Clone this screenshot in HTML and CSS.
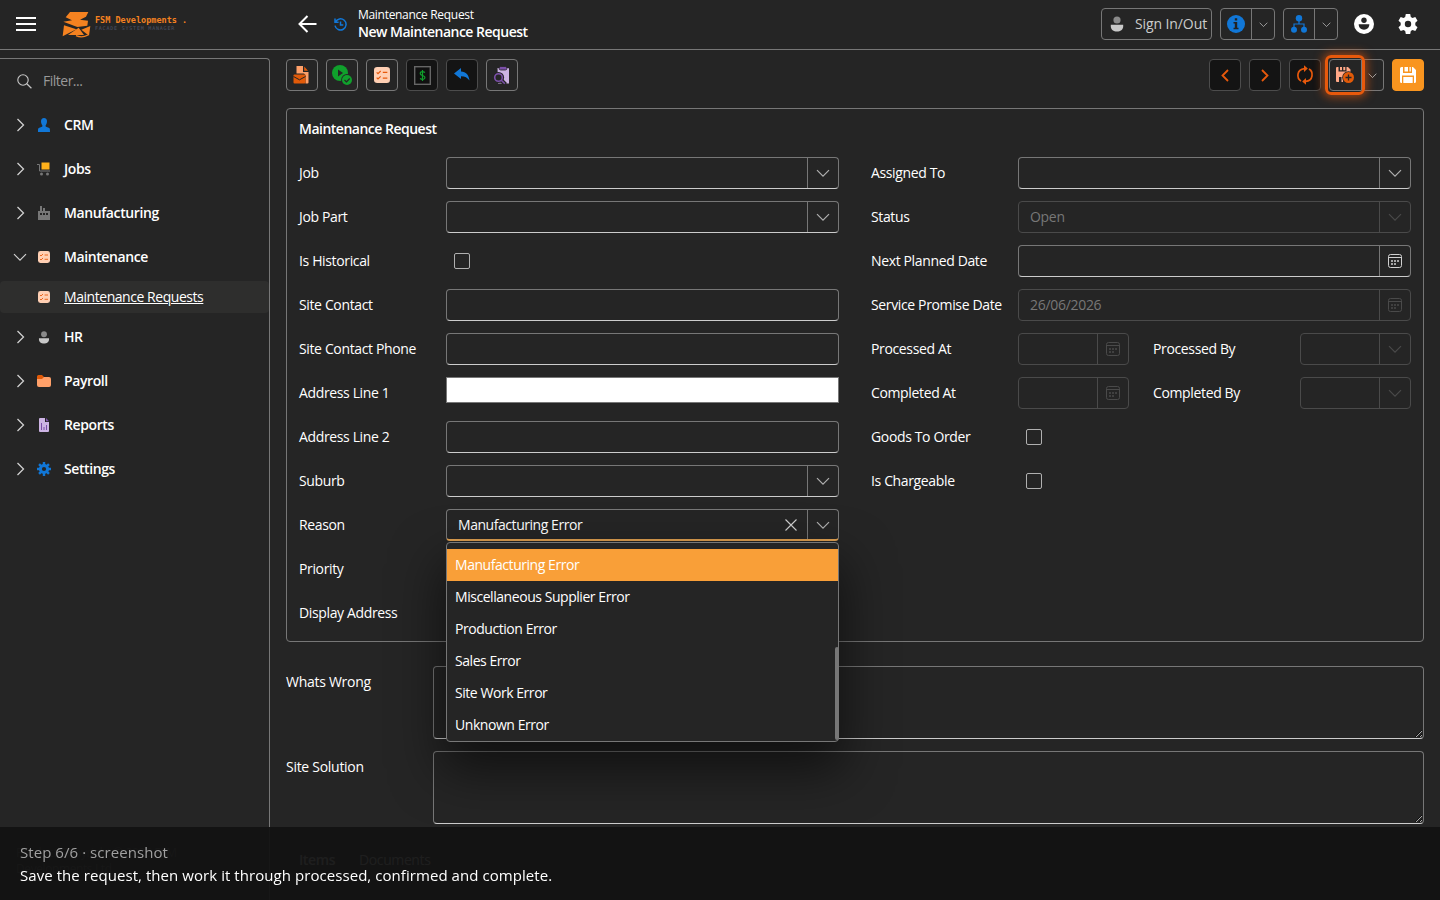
FILE: index.html
```
<!DOCTYPE html>
<html lang="en">
<head>
  <meta charset="UTF-8" />
  <meta name="viewport" content="width=device-width, initial-scale=1.0"/>
  <title>New Maintenance Request</title>
  <link rel="stylesheet" href="styles.css">
</head>
<body>
  <!-- shared icons -->
  <svg class="sprite" xmlns="http://www.w3.org/2000/svg">
    <symbol id="chev-right" viewBox="0 0 14 14"><path d="M4.500 1l6 6-6 6" fill="none" stroke="currentColor" stroke-width="1.300"/></symbol>
    <symbol id="chev-down" viewBox="0 0 14 14"><path d="M1 4.200l6 6 6-6" fill="none" stroke="currentColor" stroke-width="1.200"/></symbol>
    <symbol id="calendar" viewBox="0 0 14 14">
      <rect x=".5" y=".5" width="13" height="13" rx="2" fill="none" stroke="currentColor"/>
      <path d="M1 3.500h12" stroke="currentColor"/>
      <path d="M6 6h2v2H6zM9 6h2v2H9zM3 6h2v2H3zM3 9h2v2H3zM6 9h2v2H6z" fill="currentColor" opacity=".75"/>
    </symbol>
    <symbol id="tasks" viewBox="0 0 12 12">
      <rect width="12" height="12" rx="2.400" fill="#ffcfb3"/>
      <path d="M2 4l1 1 2-2M2 8l1 1 2-2M6.600 4h3.400M6.600 8.300h3.400" fill="none" stroke="#e8590c" stroke-width=".9"/>
    </symbol>
    <symbol id="person" viewBox="0 0 14 16">
      <circle cx="7" cy="4" r="3.600" fill="#8a8a8a"/>
      <path d="M.8 8.800h12.400v1.600c0 3-2.800 5-6.200 5s-6.200-2-6.200-5z" fill="#c8c8c8"/>
    </symbol>
  </svg>

  <header class="topbar">
    <div class="brand">
      <svg class="burger" width="20" height="14" viewBox="0 0 20 14"><path d="M0 1h20M0 7h20M0 13h20" stroke="#fff" stroke-width="2"/></svg>
      <svg class="logo" width="29" height="27" viewBox="186 30 87 81">
        <path fill="#f58220" d="M210 33h55l-7 14-18 9 24 3-2 15-30 4-42-16 26-4-19-9z"/>
        <path fill="#f58220" d="M192 73l37 12-41 21zM236 80l16 22h-48zM271 75l-4 29-23-18z"/>
        <path d="M228 104q18 8 36-2" fill="none" stroke="#f58220" stroke-width="4"/>
      </svg>
      <div class="logo-text">
        <b>FSM Developments .</b>
        <span>FACADE SYSTEM MANAGER</span>
      </div>
    </div>
    <div class="crumbs">
      <svg width="19" height="18" viewBox="0 0 19 18"><path d="M18.500 9H1.500M9.500 1l-8 8 8 8" fill="none" stroke="#fff" stroke-width="2"/></svg>
      <svg class="history" width="13" height="13" viewBox="0 0 13 13"><path d="M1.400 4A5.600 5.600 0 1 1 1 7.600M1 .6V4.200h3.600M6.500 3.600v3.400h2.800" fill="none" stroke="#1177d7" stroke-width="1.500"/></svg>
      <div class="titles">
        <span>Maintenance Request</span>
        <b>New Maintenance Request</b>
      </div>
    </div>
    <div class="top-actions">
      <button class="sign"><svg width="14" height="16"><use href="#person"/></svg>Sign In/Out</button>
      <div class="split">
        <span class="main-part"><svg width="18" height="18" viewBox="0 0 18 18"><circle cx="9" cy="9" r="9" fill="#1177d7"/><path d="M7.800 3.200h2.400v2.300H7.800zM6.500 7h3.700v5.800h1.300v1.400h-5v-1.400h1.300V8.400H6.500z" fill="#222"/></svg></span>
        <span class="drop-part"><svg width="9" height="9"><use href="#chev-down"/></svg></span>
      </div>
      <div class="split">
        <span class="main-part"><svg width="16" height="18" viewBox="0 0 16 18"><g fill="#1177d7"><circle cx="8" cy="3.200" r="3.200"/><circle cx="3" cy="14.800" r="3"/><circle cx="13" cy="14.800" r="3"/></g><path d="M8 5v4M3 13V9h10v4" fill="none" stroke="#1177d7" stroke-width="1.200"/></svg></span>
        <span class="drop-part"><svg width="9" height="9"><use href="#chev-down"/></svg></span>
      </div>
      <svg class="account" width="20" height="20" viewBox="0 0 20 20"><circle cx="10" cy="10" r="10" fill="#fff"/><circle cx="10" cy="6.300" r="2.700" fill="#252525"/><path d="M4.700 10.300h10.600c0 3.500-2.200 5.400-5.300 5.400s-5.300-1.900-5.300-5.400z" fill="#252525"/></svg>
      <svg width="20" height="20" viewBox="0 0 20 20"><path fill="#fff" fill-rule="evenodd" d="M7.800 0h4.400l.6 2.900 1.700 1 2.800-1 2.200 3.800L17.300 8.700v2.600l2.200 2-2.200 3.800-2.800-1-1.700 1-.6 2.900H7.800l-.6-2.900-1.700-1-2.800 1L.5 13.300l2.200-2V8.700L.5 6.700l2.200-3.800 2.800 1 1.700-1zM10 6.800a3.200 3.200 0 1 0 0 6.400 3.200 3.200 0 0 0 0-6.400z"/></svg>
    </div>
  </header>

  <div class="layout">
    <nav class="sidebar">
      <div class="filter">
        <svg width="15" height="15" viewBox="0 0 15 15"><circle cx="6" cy="6" r="5.200" fill="none" stroke="#c8c8c8" stroke-width="1.100"/><path d="M9.800 9.800l4.600 4.400" stroke="#c8c8c8" stroke-width="1.200"/></svg>
        <span>Filter...</span>
      </div>
      <div class="nav-item">
        <svg class="chev" width="14" height="14"><use href="#chev-right"/></svg>
        <svg class="ico" width="14" height="14" viewBox="0 0 14 14"><path d="M7 0c2 0 3 1.300 3 3.300S9 7 8.500 7.700c0 1 .5 1.200 2.500 1.700s2 1.300 2 4.600H1c0-3.300 0-4.100 2-4.600s2.500-.7 2.500-1.700C5 7 4 5.300 4 3.300S5 0 7 0z" fill="#1177d7"/></svg>
        <b>CRM</b>
      </div>
      <div class="nav-item">
        <svg class="chev" width="14" height="14"><use href="#chev-right"/></svg>
        <svg class="ico" width="14" height="14" viewBox="0 0 14 14"><path d="M4.500 .5h8v7h-8z" fill="#ffb11b"/><path d="M0 2.500h2.500v6.500H13" fill="none" stroke="#777"/><circle cx="4.500" cy="12" r="1.500" fill="#777"/><circle cx="10.500" cy="12" r="1.500" fill="#777"/></svg>
        <b>Jobs</b>
      </div>
      <div class="nav-item">
        <svg class="chev" width="14" height="14"><use href="#chev-right"/></svg>
        <svg class="ico" width="14" height="14" viewBox="0 0 14 14"><path d="M1 5h2V0h2v5h1V2h2v3h5v9H1z" fill="#777"/><path d="M3 7h2v2H3zM6 7h2v2H6zM9 7h2v2H9z" fill="#252525"/></svg>
        <b>Manufacturing</b>
      </div>
      <div class="nav-item">
        <svg class="chev" width="14" height="14"><use href="#chev-down"/></svg>
        <svg class="ico" width="12" height="12"><use href="#tasks"/></svg>
        <b>Maintenance</b>
      </div>
      <div class="nav-item sub">
        <svg class="ico" width="12" height="12"><use href="#tasks"/></svg>
        <a>Maintenance Requests</a>
      </div>
      <div class="nav-item">
        <svg class="chev" width="14" height="14"><use href="#chev-right"/></svg>
        <svg class="ico" width="12" height="13"><use href="#person"/></svg>
        <b>HR</b>
      </div>
      <div class="nav-item">
        <svg class="chev" width="14" height="14"><use href="#chev-right"/></svg>
        <svg class="ico" width="14" height="12" viewBox="0 0 14 12"><rect y="2" width="14" height="10" rx="2" fill="#ffa069"/><path d="M0 4V1.500Q0 0 1.500 0H5l2 2-2 2z" fill="#e25a08"/></svg>
        <b>Payroll</b>
      </div>
      <div class="nav-item">
        <svg class="chev" width="14" height="14"><use href="#chev-right"/></svg>
        <svg class="ico" width="10" height="14" viewBox="0 0 10 14"><path d="M1 0h5v4h4v9q0 1-1 1H1q-1 0-1-1V1q0-1 1-1z" fill="#cdb4e4"/><path d="M7 0l3 3.200H7z" fill="#7b4fa8"/><path d="M2.500 5v7M5 9v3M7.500 7v5" stroke="#7b4fa8"/></svg>
        <b>Reports</b>
      </div>
      <div class="nav-item">
        <svg class="chev" width="14" height="14"><use href="#chev-right"/></svg>
        <svg class="ico" width="14" height="14" viewBox="0 0 14 14"><circle cx="7" cy="7" r="3.600" fill="none" stroke="#1177d7" stroke-width="3"/><path d="M7 0v3M7 11v3M0 7h3M11 7h3M2.050 2.050l2 2M9.950 9.950l2 2M11.950 2.050l-2 2M4.050 9.950l-2 2" stroke="#1177d7" stroke-width="2.400"/></svg>
        <b>Settings</b>
      </div>
      <div class="copyright">Product Copyright © 2026 FSM Developments Ltd</div>
    </nav>

    <main>
      <div class="toolbar">
        <button><svg width="18" height="20" viewBox="0 0 18 20"><path d="M3.500 1h6.500v6h5.500v10.500q0 1-1 1H12.500V10L11 8.500H3.500z" fill="#ffa069"/><path d="M11.200 1.500L15 5.800h-3.800z" fill="#e25a08"/><rect x=".5" y="9.500" width="12" height="9" rx="1" fill="#e25a08"/><path d="M.5 11.500l6 3.300 6-3.300" fill="none" stroke="#252525"/></svg></button>
        <button><svg width="20" height="20" viewBox="0 0 20 20"><circle cx="8" cy="8" r="8" fill="#10a02c"/><path d="M6 4.500l5 3.500-5 3.500z" fill="#252525"/><circle cx="15" cy="15" r="5.900" fill="#252525"/><circle cx="15" cy="15" r="5" fill="#10a02c"/><path d="M12.500 15l2 2 3.200-3.500" fill="none" stroke="#252525" stroke-width="1.200"/></svg></button>
        <button><svg width="16" height="16"><use href="#tasks"/></svg></button>
        <button class="dark"><svg width="17" height="19" viewBox="0 0 17 19"><rect x=".7" y=".7" width="15.600" height="17.600" fill="#101010" stroke="#666" stroke-width="1.400"/><path d="M11 6.500Q8.500 4.800 6.500 6.200 5.500 8.700 8.500 9.500 11.800 10.500 10.500 12.600 8.500 14.200 6 12.600M8.500 4v11" fill="none" stroke="#10a02c" stroke-width="1.200"/></svg></button>
        <button class="dark"><svg width="16" height="14" viewBox="0 0 16 14"><path d="M0 5.500L7 0v3.400c5 .2 8 3.600 8.500 9.100C13.500 9.600 11 8.200 7 8.200V11z" fill="#1177d7"/></svg></button>
        <button><svg width="18" height="19" viewBox="0 0 18 19"><path d="M4.500 2H15q1 0 1 1v14.500H5z" fill="#cdb4e4"/><rect x="6" y=".5" width="8" height="3.500" rx="1.700" fill="#7b4fa8" stroke="#252525" stroke-width=".8"/><circle cx="5.500" cy="11.500" r="5.600" fill="#252525"/><path d="M8 14l4.500 4.500" stroke="#252525" stroke-width="4"/><circle cx="5.500" cy="11.500" r="3.800" fill="none" stroke="#7b4fa8" stroke-width="1.600"/><path d="M8.300 14.300l3.500 3.500" stroke="#7b4fa8" stroke-width="1.600"/></svg></button>

        <div class="spacer"></div>

        <button class="dark"><svg width="8" height="13" viewBox="0 0 8 13"><path d="M7 1L1.500 6.500 7 12" fill="none" stroke="#e8590c" stroke-width="1.800"/></svg></button>
        <button class="dark"><svg width="8" height="13" viewBox="0 0 8 13"><path d="M1 1l5.500 5.500L1 12" fill="none" stroke="#e8590c" stroke-width="1.800"/></svg></button>
        <button class="dark"><svg width="18" height="20" viewBox="0 0 18 20"><path d="M5 16C.6 13.500 .2 4.500 8.500 3.600M13 4C17.400 6.500 17.800 15.500 9.500 16.400" fill="none" stroke="#e8590c" stroke-width="1.700"/><path d="M8 .2l3.800 3.400L8 7zM10 19.800l-3.800-3.400L10 13z" fill="#e8590c"/></svg></button>
        <div class="save-new">
          <button class="highlight"><svg width="19" height="18" viewBox="0 0 19 18"><path d="M1 1h1.500v4.500h8V1H12l2.500 2.500v4L7 9v7H5.500v-5H3v5H1q-1 0-1-1V2q0-1 1-1zM4 1h2v3.200H4zM7.300 1h2v3.200h-2z" fill="#ffa887"/><circle cx="12.500" cy="11.500" r="6.300" fill="#252525"/><circle cx="12.500" cy="11.500" r="5.500" fill="#e25a08"/><path d="M12.500 8.500v6M9.500 11.500h6" stroke="#252525" stroke-width="1.300"/></svg></button>
          <button class="more"><svg width="9" height="9"><use href="#chev-down"/></svg></button>
        </div>
        <button class="primary"><svg width="16" height="16" viewBox="0 0 16 16"><path d="M1.500 0H3v6h9V0h1l3 3v11.500q0 1.500-1.500 1.500H14V8.500H2V16h-.5Q0 16 0 14.500v-13Q0 0 1.500 0zM4.500 0H8v4.500H4.500zM9.500 0h1.300v4.500H9.500zM3.300 10h9.400v6H3.300z" fill="#fff"/></svg></button>
      </div>

      <section class="group">
        <h2>Maintenance Request</h2>
        <div class="columns">
          <div class="col">
            <div class="row"><label>Job</label><div class="field"><span></span><i><svg width="14" height="14"><use href="#chev-down"/></svg></i></div></div>
            <div class="row"><label>Job Part</label><div class="field"><span></span><i><svg width="14" height="14"><use href="#chev-down"/></svg></i></div></div>
            <div class="row"><label>Is Historical</label><div class="check"></div></div>
            <div class="row"><label>Site Contact</label><div class="field"></div></div>
            <div class="row"><label>Site Contact Phone</label><div class="field"></div></div>
            <div class="row"><label>Address Line 1</label><div class="field plain"></div></div>
            <div class="row"><label>Address Line 2</label><div class="field"></div></div>
            <div class="row"><label>Suburb</label><div class="field"><span></span><i><svg width="14" height="14"><use href="#chev-down"/></svg></i></div></div>
            <div class="row">
              <label>Reason</label>
              <div class="field open">
                <span>Manufacturing Error</span>
                <svg class="clear" width="12" height="12" viewBox="0 0 12 12"><path d="M.5.5l11 11M11.500.5l-11 11" stroke="#d0d0d0" stroke-width="1.100"/></svg>
                <i><svg width="14" height="14"><use href="#chev-down"/></svg></i>
                <ul class="dropdown">
                  <li class="selected">Manufacturing Error</li>
                  <li>Miscellaneous Supplier Error</li>
                  <li>Production Error</li>
                  <li>Sales Error</li>
                  <li>Site Work Error</li>
                  <li>Unknown Error</li>
                </ul>
              </div>
            </div>
            <div class="row"><label>Priority</label><div class="field"></div></div>
            <div class="row"><label>Display Address</label><div class="field"></div></div>
          </div>

          <div class="col">
            <div class="row"><label>Assigned To</label><div class="field"><span></span><i><svg width="14" height="14"><use href="#chev-down"/></svg></i></div></div>
            <div class="row"><label>Status</label><div class="field disabled"><span>Open</span><i><svg width="14" height="14"><use href="#chev-down"/></svg></i></div></div>
            <div class="row"><label>Next Planned Date</label><div class="field"><span></span><i class="cal"><svg width="14" height="14"><use href="#calendar"/></svg></i></div></div>
            <div class="row"><label>Service Promise Date</label><div class="field disabled date"><span>26/06/2026</span><i><svg width="14" height="14"><use href="#calendar"/></svg></i></div></div>
            <div class="pair">
              <div class="row"><label>Processed At</label><div class="field disabled"><span></span><i><svg width="14" height="14"><use href="#calendar"/></svg></i></div></div>
              <div class="row"><label>Processed By</label><div class="field disabled"><span></span><i><svg width="14" height="14"><use href="#chev-down"/></svg></i></div></div>
            </div>
            <div class="pair">
              <div class="row"><label>Completed At</label><div class="field disabled"><span></span><i><svg width="14" height="14"><use href="#calendar"/></svg></i></div></div>
              <div class="row"><label>Completed By</label><div class="field disabled"><span></span><i><svg width="14" height="14"><use href="#chev-down"/></svg></i></div></div>
            </div>
            <div class="row"><label>Goods To Order</label><div class="check"></div></div>
            <div class="row"><label>Is Chargeable</label><div class="check"></div></div>
          </div>
        </div>
      </section>

      <div class="memo"><label>Whats Wrong</label><textarea></textarea></div>
      <div class="memo"><label>Site Solution</label><textarea></textarea></div>

      <div class="tabs"><b>Items</b><span>Documents</span></div>
    </main>
  </div>

  <div class="step-bar">
    <p class="step">Step 6/6 · screenshot</p>
    <p>Save the request, then work it through processed, confirmed and complete.</p>
  </div>
</body>
</html>
```
FILE: styles.css
```
* {
  box-sizing: border-box;
}
body {
  margin: 0;
  height: 900px;
  overflow: hidden;
  background: #252525;
  color: #fff;
  font-family: 'Segoe UI', 'Open Sans', sans-serif;
  font-size: 14px;
  line-height: 20px;
  letter-spacing: -0.4px;
}
b, h2 {
  font-weight: 600;
}
svg {
  display: block;
  flex: none;
}
.sprite {
  position: absolute;
  width: 0;
  height: 0;
}

/* header */
.topbar {
  display: flex;
  align-items: center;
  height: 50px;
  padding-bottom: 1px;
  border-bottom: 1px solid #777;
}
.brand {
  display: flex;
  align-items: center;
  width: 299px;
  padding-left: 16px;
}
.logo {
  margin-left: 26px;
}
.logo-text {
  margin: -2px 0 0 4px;
  font-family: 'DejaVu Sans Mono', monospace;
  letter-spacing: 0;
  white-space: nowrap;
}
.logo-text b {
  display: block;
  color: #f58220;
  font-size: 8.5px;
  font-weight: bold;
  line-height: 10px;
}
.logo-text span {
  display: block;
  color: #4d5365;
  font-size: 5px;
  line-height: 7px;
  letter-spacing: 0.8px;
}
.crumbs {
  display: flex;
  align-items: center;
  margin-left: -1px;
}
.history {
  margin-left: 17px;
}
.titles {
  margin: -2px 0 0 11px;
  line-height: 17px;
}
.titles span, .titles b {
  display: block;
}
.titles span {
  font-size: 12px;
  letter-spacing: -0.3px;
}
.titles b {
  letter-spacing: -0.5px;
}
.top-actions {
  display: flex;
  align-items: center;
  margin-left: auto;
  padding-right: 22px;
}
button {
  display: flex;
  align-items: center;
  justify-content: center;
  width: 32px;
  height: 32px;
  padding: 0;
  border: 1px solid #777;
  border-radius: 4px;
  background: #252525;
  color: #ccc;
  font: inherit;
  letter-spacing: inherit;
}
.sign {
  justify-content: flex-start;
  width: 111px;
  gap: 11px;
  margin-right: 8px;
  padding-left: 8px;
  letter-spacing: -0.1px;
  white-space: nowrap;
}
.split {
  display: flex;
  width: 55px;
  height: 32px;
  margin-right: 8px;
  border: 1px solid #777;
  border-radius: 4px;
  color: #bbb;
}
.split span {
  display: flex;
  align-items: center;
  justify-content: center;
}
.main-part {
  width: 31px;
  border-right: 1px solid #777;
}
.drop-part {
  flex: 1;
}
.account {
  margin: 0 24px 0 8px;
}

.layout {
  display: flex;
  height: 850px;
}

/* sidebar */
.sidebar {
  position: relative;
  width: 270px;
  margin-top: 8px;
  border-top: 1px solid #777;
  border-right: 1px solid #777;
  border-top-right-radius: 4px;
}
.filter {
  display: flex;
  align-items: center;
  height: 44px;
  padding-left: 17px;
  gap: 11px;
  color: #999;
  letter-spacing: -0.5px;
}
.nav-item {
  display: grid;
  grid-template-columns: 14px 32px auto;
  align-items: center;
  height: 44px;
  padding-left: 13px;
  column-gap: 1px;
  justify-content: start;
}
.nav-item .ico {
  justify-self: center;
}
.nav-item b, .nav-item a {
  margin-left: 3px;
}
.nav-item.sub {
  grid-template-columns: 32px auto;
  height: 32px;
  margin: 2px 0;
  padding-left: 28px;
  background: #2e2e2d;
  border-radius: 4px;
}
.nav-item.sub a {
  text-decoration: underline;
  letter-spacing: -0.45px;
}
.chev {
  color: #d0d0d0;
}
.copyright {
  position: absolute;
  left: 16px;
  bottom: 23px;
  width: 200px;
  font-size: 12px;
  line-height: 16px;
  color: #777;
}

/* main form */
main {
  flex: 1;
  padding: 9px 16px 0;
}
.toolbar {
  display: flex;
  gap: 8px;
}
.spacer {
  flex: 1;
}
.dark {
  background: #141414;
  border-color: #4c4c4c;
}
.save-new {
  display: flex;
  width: 55px;
}
.highlight {
  position: relative;
  z-index: 1;
  width: 33px;
  border-radius: 4px 0 0 4px;
}
/* glowing ring round the current step's target */
.highlight::after {
  content: '';
  position: absolute;
  inset: -5px -4px -5px -5px;
  border: 3px solid #e8590c;
  border-radius: 6px;
  box-shadow: 0 0 10px 2px rgba(232, 89, 12, 0.6);
}
.more {
  width: 22px;
  border-left: 0;
  border-radius: 0 4px 4px 0;
}
.primary {
  background: #f9951f;
  border-color: #f9951f;
}
.group {
  height: 534px;
  margin-top: 17px;
  padding: 0 12px;
  border: 1px solid #777;
  border-radius: 4px;
}
h2 {
  height: 42px;
  margin: 0;
  font-size: 14px;
  line-height: 40px;
  letter-spacing: -0.5px;
}
.columns {
  display: grid;
  grid-template-columns: 540px 540px;
  gap: 32px;
}
.row {
  display: flex;
  height: 44px;
  padding: 6px 0;
}
.pair {
  display: grid;
  grid-template-columns: 1fr 1fr;
  gap: 24px;
}
label {
  width: 147px;
  flex: none;
  line-height: 32px;
  letter-spacing: -0.36px;
}
.field {
  position: relative;
  display: flex;
  align-items: center;
  flex: 1;
  height: 32px;
  border: 1px solid #777;
  border-bottom-color: #ccc;
  border-radius: 4px;
  background: #252525;
  letter-spacing: -0.45px;
}
.field span {
  flex: 1;
  padding-left: 11px;
}
.field i {
  display: flex;
  align-items: center;
  justify-content: center;
  width: 31px;
  height: 100%;
  border-left: 1px solid #777;
  color: #b0b0b0;
}
.field .cal {
  color: #d0d0d0;
}
.field.disabled, .field.disabled i {
  border-color: #4a4a4a;
  color: #4a4a4a;
}
.field.disabled span {
  color: #777;
  letter-spacing: -0.3px;
}
.field.plain {
  height: 26px;
  background: #fff;
  border-color: #777;
  border-radius: 0;
}
.field.open {
  border-bottom: 2px solid #e0a050;
}
.clear {
  margin-right: 10px;
}
.check {
  width: 16px;
  height: 16px;
  margin: 8px;
  border: 1px solid #b0b0b0;
  border-radius: 2px;
}
.dropdown {
  position: absolute;
  z-index: 2;
  top: 32px;
  left: -1px;
  right: -1px;
  height: 200px;
  margin: 0;
  padding: 6px 0 0;
  list-style: none;
  background: #252525;
  border: 1px solid #777;
  border-radius: 4px;
  box-shadow: 0 24px 50px 4px rgba(0, 0, 0, 0.55);
}
.dropdown li {
  height: 32px;
  padding-left: 8px;
  line-height: 32px;
}
.dropdown .selected {
  background: #f99f38;
}
/* scroll thumb */
.dropdown::after {
  content: '';
  position: absolute;
  right: -1px;
  bottom: 1px;
  width: 4px;
  height: 93px;
  background: #777;
  border-radius: 2px;
}

.memo {
  display: flex;
  margin-top: 12px;
}
.group + .memo {
  margin-top: 24px;
}
.memo label {
  letter-spacing: -0.28px;
}
textarea {
  flex: 1;
  height: 73px;
  border: 1px solid #777;
  border-bottom-color: #ccc;
  border-radius: 4px;
  background: transparent;
  color: #fff;
  color-scheme: dark;
}
.tabs {
  display: flex;
  gap: 24px;
  padding: 26px 13px 0;
}

/* caption over the page */
.step-bar {
  position: fixed;
  z-index: 5;
  left: 0;
  right: 0;
  bottom: 0;
  height: 73px;
  padding: 14px 20px;
  background: rgba(18, 18, 18, 0.95);
  font-size: 15px;
  line-height: 23px;
  letter-spacing: 0.06px;
}
.step-bar p {
  margin: 0;
}
.step-bar .step {
  color: #a0a0a0;
}
```
